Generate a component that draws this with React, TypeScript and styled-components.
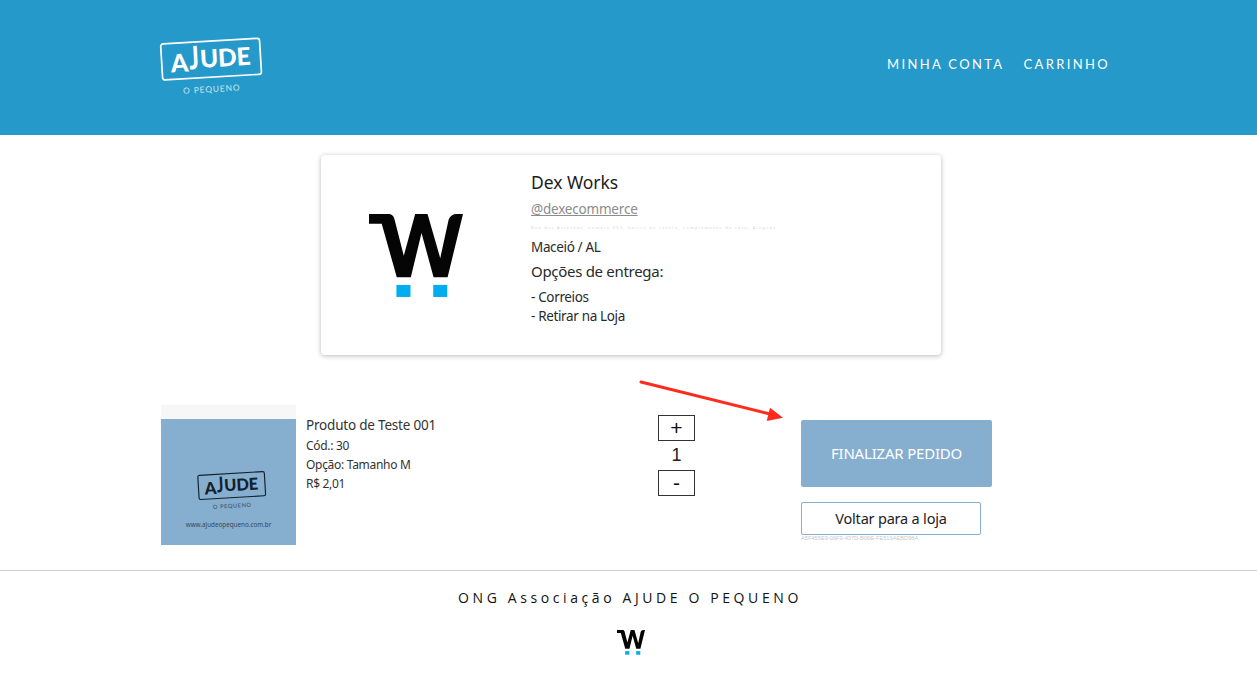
import React from "react";
import styled, { createGlobalStyle } from "styled-components";

const Global = createGlobalStyle`
  html, body { margin: 0; padding: 0; background: #fff; }
  body { font-family: "Noto Sans", "Open Sans", sans-serif; color: #222; overflow: hidden; }
  * { box-sizing: border-box; }
`;

const Page = styled.div`
  width: 1257px;
  height: 681px;
  display: flex;
  flex-direction: column;
`;

const Header = styled.header`
  height: 135px;
  background: #2599c9;
  display: flex;
  align-items: center;
  justify-content: space-between;
  padding: 0 147px 0 158px;
  flex: none;
`;

const HeaderLogo = styled.div`
  margin-bottom: 14px;
`;

const LogoSvg = styled.svg`
  display: block;
  overflow: visible;
`;

const Nav = styled.nav`
  display: flex;
  gap: 19px;
  margin-top: -8px;
`;

const NavLink = styled.a`
  font-family: Lato, sans-serif;
  color: #fff;
  font-size: 13px;
  letter-spacing: 2.35px;
  line-height: 16px;
`;

const Card = styled.section`
  width: 620px;
  height: 200px;
  margin: 20px 0 0 321px;
  background: #fff;
  border-radius: 4px;
  box-shadow: 0 1px 5px rgba(0, 0, 0, 0.28);
  display: flex;
  flex: none;
`;

const CardLogo = styled.div`
  width: 210px;
  padding: 59px 0 0 48px;
  flex: none;
`;

const CardInfo = styled.div`
  display: flex;
  flex-direction: column;
  padding-top: 15px;
`;

const Name = styled.div`
  font-size: 17.5px;
  line-height: 25px;
  color: #1c1c1c;
  height: 30px;
  letter-spacing: -0.05px;
`;

const Handle = styled.a`
  font-size: 13.5px;
  line-height: 19px;
  color: #8c8c8c;
  text-decoration: underline;
  letter-spacing: -0.2px;
`;

const Blurred = styled.div`
  height: 5px;
  width: 246px;
  margin: 6px 0 0;
  font-size: 4px;
  line-height: 5px;
  color: #d6d6d6;
  letter-spacing: 1.25px;
  white-space: nowrap;
`;

const Detail = styled.div<{ $top?: number }>`
  font-size: 13.5px;
  line-height: 19px;
  color: #2a2a2a;
  letter-spacing: -0.35px;
  margin-top: ${(p) => p.$top ?? 0}px;
`;

const Subhead = styled.div`
  font-size: 15px;
  line-height: 20px;
  color: #2a2a2a;
  letter-spacing: -0.3px;
  margin: 4px 0 7px;
`;

const Order = styled.section`
  position: relative;
  display: flex;
  margin: 50px 0 0 161px;
  height: 165px;
  flex: none;
`;

const ProductImage = styled.div`
  width: 135px;
  height: 140px;
  background: #85aecf;
  border-top: 14px solid #f7f7f7;
  flex: none;
  display: flex;
  flex-direction: column;
  align-items: center;
  padding-top: 49px;
`;

const ImageLogo = styled.div`
  margin-left: 8px;
`;

const ImageUrl = styled.div`
  font-size: 6.3px;
  line-height: 9px;
  color: #36495a;
  margin-top: 15px;
`;

const ProductInfo = styled.div`
  width: 362px;
  padding: 10px 0 0 10px;
  flex: none;
`;

const ProductName = styled.div`
  font-size: 13.5px;
  line-height: 20px;
  color: #333;
  margin-bottom: 1px;
  letter-spacing: -0.2px;
`;

const ProductLine = styled.div`
  font-size: 12px;
  line-height: 19px;
  color: #333;
  letter-spacing: -0.3px;
`;

const Qty = styled.div`
  width: 37px;
  padding-top: 10px;
  flex: none;
  display: flex;
  flex-direction: column;
  font-family: "Liberation Sans", Arial, sans-serif;
`;

const QtyButton = styled.button`
  width: 37px;
  height: 26px;
  padding: 0;
  background: #fff;
  border: 1px solid #333;
  font-family: inherit;
  font-size: 21px;
  line-height: 22px;
  color: #111;
`;

const QtyValue = styled.div`
  height: 29px;
  text-align: center;
  font-size: 18px;
  line-height: 29px;
  color: #222;
`;

const Actions = styled.div`
  margin-left: 106px;
  padding-top: 15px;
  width: 191px;
  flex: none;
`;

const Finish = styled.button`
  display: block;
  width: 191px;
  height: 67px;
  padding: 0 0 2px;
  background: #85aecf;
  border: none;
  border-radius: 2px;
  color: #fff;
  font-family: inherit;
  font-size: 15px;
  letter-spacing: -0.2px;
`;

const Back = styled.button`
  display: block;
  width: 180px;
  height: 33px;
  padding: 0 0 2px;
  margin-top: 15px;
  background: #fff;
  border: 1px solid #85aecf;
  border-radius: 2px;
  color: #222;
  font-family: inherit;
  font-size: 14.5px;
  letter-spacing: -0.2px;
`;

const OrderId = styled.div`
  font-family: "Liberation Sans", sans-serif;
  font-size: 5.7px;
  line-height: 7px;
  color: #c8c8c8;
  white-space: nowrap;
`;

const Arrow = styled.svg`
  position: absolute;
  left: 479px;
  top: -25px;
  overflow: visible;
`;

const Footer = styled.footer`
  border-top: 1px solid #cfcfcf;
  display: flex;
  flex-direction: column;
  align-items: center;
  flex: 1;
`;

const FooterText = styled.div`
  margin-top: 17px;
  padding-left: 3px;
  font-family: "Open Sans", sans-serif;
  font-size: 14px;
  line-height: 19px;
  letter-spacing: 3.6px;
  color: #111;
`;

const FooterLogo = styled.div`
  margin: 23px 0 0 4px;
`;

const Logo = ({ color, width, tagline = "O PEQUENO" }: { color: string; width: number; tagline?: string }) => (
  <LogoSvg width={width} height={width * 0.5} viewBox="0 0 110 55" aria-label="Ajude o Pequeno">
    <g transform="rotate(-3.4 55 25)">
      <rect x="3.5" y="8" width="99" height="36" rx="2.5" fill="none" stroke={color} strokeWidth="1.7" />
      <text x="12.5" y="37" fontFamily="Lato, sans-serif" fontWeight="900" fontSize="25" fill={color}>A</text>
      <text transform="translate(31 35) scale(0.9 1.28)" fontFamily="Lato, sans-serif" fontWeight="900" fontSize="25" fill={color}>J</text>
      <text x="42" y="34" fontFamily="Lato, sans-serif" fontWeight="900" fontSize="24.5" letterSpacing="-0.2" fill={color}>UDE</text>
      <text x="52" y="59" textAnchor="middle" fontFamily="Lato, sans-serif" fontSize="8.4" letterSpacing="0.9" fill={color} opacity="0.75">{tagline}</text>
    </g>
  </LogoSvg>
);

const WMark = ({ width }: { width: number }) => (
  <svg width={width} height={(width * 248) / 281} viewBox="147 193 281 248" style={{ display: "block" }} aria-label="W">
    <path
      fill="#050505"
      d="M147 193H205Q219 193 223 208L251 318L285 193H322L360 325L385 210Q391 193 410 193H428L382 382H340L304 250L272 382H230L185 222H147Z"
    />
    <rect x="229" y="405" width="42" height="36" fill="#00aeef" />
    <rect x="339" y="405" width="42" height="36" fill="#00aeef" />
  </svg>
);

export default function App() {
  return (
    <Page>
      <Global />
      <Header>
        <HeaderLogo>
          <Logo color="#ffffff" width={110} />
        </HeaderLogo>
        <Nav>
          <NavLink>MINHA CONTA</NavLink>
          <NavLink>CARRINHO</NavLink>
        </Nav>
      </Header>

      <Card>
        <CardLogo>
          <WMark width={94} />
        </CardLogo>
        <CardInfo>
          <Name>Dex Works</Name>
          <Handle>@dexecommerce</Handle>
          <Blurred>Rua dos Artesãos, número 000, bairro do centro, complemento da casa, Alagoas</Blurred>
          <Detail $top={8}>Maceió / AL</Detail>
          <Subhead>Opções de entrega:</Subhead>
          <Detail>- Correios</Detail>
          <Detail>- Retirar na Loja</Detail>
        </CardInfo>
      </Card>

      <Order>
        <ProductImage>
          <ImageLogo>
            <Logo color="#14202b" width={74} />
          </ImageLogo>
          <ImageUrl>www.ajudeopequeno.com.br</ImageUrl>
        </ProductImage>
        <ProductInfo>
          <ProductName>Produto de Teste 001</ProductName>
          <ProductLine>Cód.: 30</ProductLine>
          <ProductLine>Opção: Tamanho M</ProductLine>
          <ProductLine>R$ 2,01</ProductLine>
        </ProductInfo>
        <Qty>
          <QtyButton>+</QtyButton>
          <QtyValue>1</QtyValue>
          <QtyButton>-</QtyButton>
        </Qty>
        <Actions>
          <Finish>FINALIZAR PEDIDO</Finish>
          <Back>Voltar para a loja</Back>
          <OrderId>A5F455E9-06F9-437D-B06E-FE519AEBD98A</OrderId>
        </Actions>
        <Arrow width="145" height="42" viewBox="0 0 145 42">
          <path d="M1 2L132 34.5" stroke="#ff2b1c" strokeWidth="3" strokeLinecap="round" />
          <path d="M143 37.7L130 27.7L126.7 41Z" fill="#ff2b1c" />
        </Arrow>
      </Order>

      <Footer>
        <FooterText>ONG Associação AJUDE O PEQUENO</FooterText>
        <FooterLogo>
          <WMark width={28} />
        </FooterLogo>
      </Footer>
    </Page>
  );
}
